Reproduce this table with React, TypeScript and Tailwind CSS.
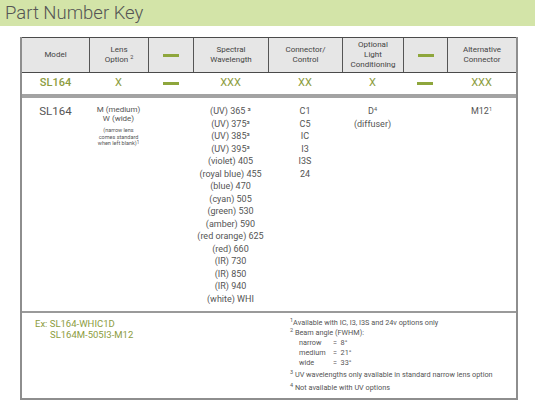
const cols = "grid grid-cols-[67px_59px_45px_75px_74px_61px_44px_69px]";

function Dash() {
  return <span className="block h-[3px] w-[16px] bg-[#8ea63c]" />;
}

function Sup({ children }: { children: React.ReactNode }) {
  return <span className="relative -top-[3px] text-[5.5px] leading-none">{children}</span>;
}

const wavelengths = [
  "(UV) 365 ³",
  "(UV) 375³",
  "(UV) 385³",
  "(UV) 395³",
  "(violet) 405",
  "(royal blue) 455",
  "(blue) 470",
  "(cyan) 505",
  "(green) 530",
  "(amber) 590",
  "(red orange) 625",
  "(red) 660",
  "(IR) 730",
  "(IR) 850",
  "(IR) 940",
  "(white) WHI",
];

const connectors = ["C1", "C5", "IC", "I3", "I3S", "24"];

export default function App() {
  return (
    <div className="h-[403px] w-[535px] bg-white font-['Roboto',sans-serif] text-[#444]">
      <div className="flex h-[26px] items-center bg-[#d3e4a8] pl-[5px]">
        <h1 className="text-[18.5px] font-light leading-none text-[#555]">Part Number Key</h1>
      </div>

      <div className="ml-[20px] mt-[11px] w-[498px] border-x-2 border-b-2 border-[#8e8e8e]">
        {/* header */}
        <div className={`${cols} h-[36px] border-y border-[#4a4a4a] bg-[#e6e6e6] text-[8px] leading-[10px] text-[#444]`}>
          <div className="flex items-center justify-center text-center">Model</div>
          <div className="flex items-center justify-center border-l border-[#555] text-center">
            <span>
              Lens
              <br />
              <span className="whitespace-nowrap">
                Option <Sup>2</Sup>
              </span>
            </span>
          </div>
          <div className="flex items-center justify-center border-l border-[#555]">
            <Dash />
          </div>
          <div className="flex items-center justify-center border-l border-[#555] text-center">
            Spectral
            <br />
            Wavelength
          </div>
          <div className="flex items-center justify-center border-l border-[#555] text-center">
            Connector/
            <br />
            Control
          </div>
          <div className="flex items-center justify-center border-l border-[#555] text-center">
            Optional
            <br />
            Light
            <br />
            Conditioning
          </div>
          <div className="flex items-center justify-center border-l border-[#555]">
            <Dash />
          </div>
          <div className="flex items-center justify-center border-l border-[#555] text-center">
            Alternative
            <br />
            Connector
          </div>
        </div>

        {/* code row */}
        <div className={`${cols} h-[25px] items-center border-b-4 border-[#a3a3a3] text-[11px] text-[#8c9c3e]`}>
          <div className="text-center font-medium">SL164</div>
          <div className="text-center">X</div>
          <div className="flex justify-center">
            <Dash />
          </div>
          <div className="text-center">XXX</div>
          <div className="text-center">XX</div>
          <div className="text-center">X</div>
          <div className="flex justify-center">
            <Dash />
          </div>
          <div className="text-center">XXX</div>
        </div>

        {/* options */}
        <div className={`${cols} h-[213px] pt-[7px] text-[9px] leading-[12.5px] text-[#555]`}>
          <div className="text-center text-[11.5px] leading-[13px]">SL164</div>
          <div className="flex flex-col items-center whitespace-nowrap text-center text-[8px] leading-[9px]">
            <span>M (medium)</span>
            <span>W (wide)</span>
            <span className="mt-[4px] text-[5.5px] leading-[6.5px]">
              (narrow lens
              <br />
              comes standard
              <br />
              when left blank)
              <span className="relative -top-[1.5px] text-[4.5px] leading-none">1</span>
            </span>
          </div>
          <div />
          <div className="-mx-[10px] flex flex-col items-center whitespace-nowrap">
            {wavelengths.map((w) => (
              <span key={w}>{w}</span>
            ))}
          </div>
          <div className="flex flex-col items-center">
            {connectors.map((c) => (
              <span key={c}>{c}</span>
            ))}
          </div>
          <div className="flex flex-col items-center">
            <span>
              D<Sup>4</Sup>
            </span>
            <span>(diffuser)</span>
          </div>
          <div />
          <div className="flex flex-col items-center">
            <span>
              M12<Sup>1</Sup>
            </span>
          </div>
        </div>

        {/* footer */}
        <div className="flex h-[87px] border-t-2 border-[#9a9a9a]">
          <div className="w-[268px] shrink-0 pl-[13px] pt-[5px] text-[9.5px] leading-[11px] text-[#8c9c3e]">
            <div>Ex: SL164-WHIC1D</div>
            <div className="pl-[15px]">SL164M-505I3-M12</div>
          </div>
          <div className="whitespace-nowrap pt-[5px] text-[7.3px] leading-[10px] text-[#555]">
            <div>
              <Sup>1</Sup>Available with IC, I3, I3S and 24v options only
            </div>
            <div>
              <Sup>2</Sup> Beam angle (FWHM):
            </div>
            <div className="grid grid-cols-[34px_auto] pl-[9px]">
              <span>narrow</span>
              <span>= &nbsp;8°</span>
              <span>medium</span>
              <span>= &nbsp;21°</span>
              <span>wide</span>
              <span>= &nbsp;33°</span>
            </div>
            <div className="mt-[2px]">
              <Sup>3</Sup> UV wavelengths only available in standard narrow lens option
            </div>
            <div className="mt-[3px]">
              <Sup>4</Sup> Not available with UV options
            </div>
          </div>
        </div>
      </div>
    </div>
  );
}
